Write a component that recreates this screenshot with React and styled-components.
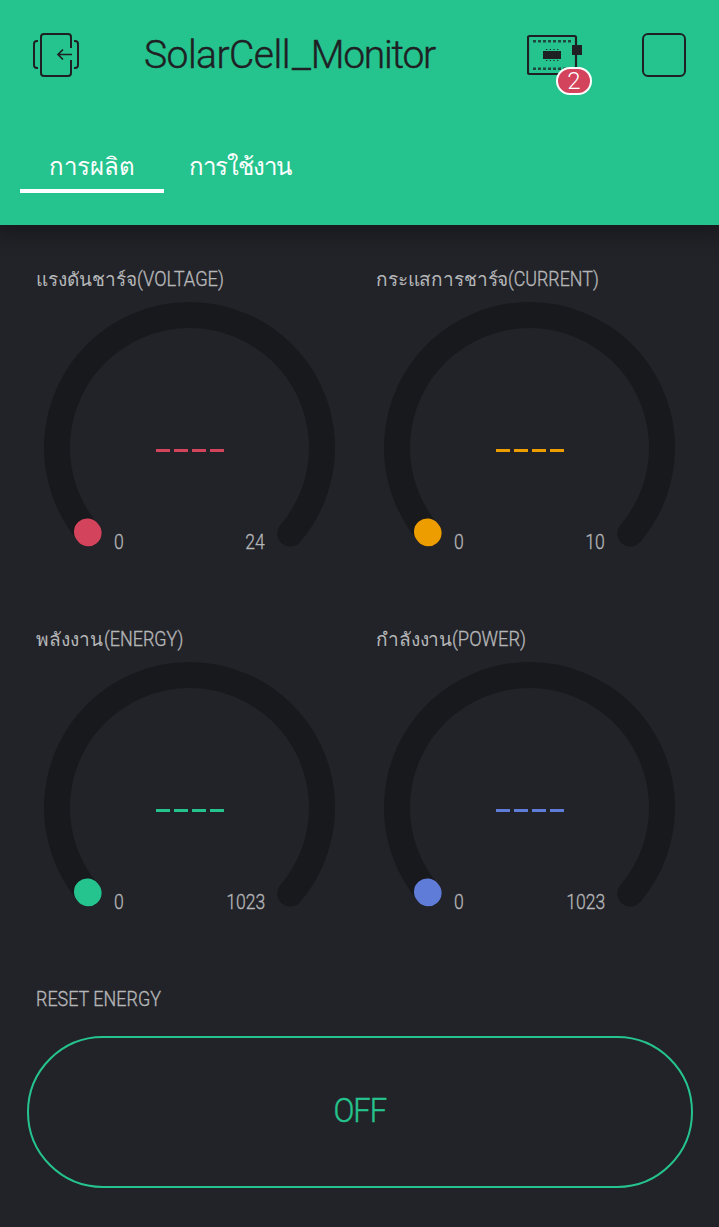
import React from "react";
import styled, { createGlobalStyle } from "styled-components";

const GlobalStyle = createGlobalStyle`
  * { box-sizing: border-box; }
  body { margin: 0; background: #222328; }
`;

const INK = "#1e2023";
const GREEN = "#25c48e";

const Screen = styled.div`
  width: 719px;
  height: 1227px;
  display: flex;
  flex-direction: column;
  overflow: hidden;
  background: #222328;
  font-family: Roboto, "Noto Sans", "Liberation Sans", sans-serif;
  font-weight: 300;
`;

const Header = styled.header`
  height: 225px;
  flex: none;
  background: ${GREEN};
  box-shadow: 0 4px 18px 6px rgba(12, 13, 16, 0.42);
`;

const TopBar = styled.div`
  height: 110px;
  display: flex;
  align-items: center;
  padding: 0 33px 0 32px;
`;

const Title = styled.h1`
  flex: 1;
  margin: 0 0 0 64px;
  color: ${INK};
  font-size: 39px;
  font-weight: 300;
  line-height: 46px;
  white-space: nowrap;
  letter-spacing: -0.55px;
  -webkit-text-stroke: 0.4px ${INK};
`;

const Underscore = styled.span`
  display: inline-block;
  margin: 0 1.5px 0 3px;
  transform: scaleX(1.12);
`;

const TitleEnd = styled.span`
  letter-spacing: -1.25px;
`;

const DeviceButton = styled.div`
  position: relative;
  width: 56px;
  height: 44px;
  margin-right: 59px;
  svg { display: block; }
`;

const Badge = styled.span`
  position: absolute;
  left: 29px;
  top: 34px;
  width: 36px;
  height: 28px;
  border: 2px solid #fff;
  border-radius: 14px;
  background: #d3435c;
  color: #fff;
  font-size: 24px;
  line-height: 25px;
  text-align: center;
`;

const StopButton = styled.div`
  width: 44px;
  height: 44px;
  border: 2px solid ${INK};
  border-radius: 6px;
`;

const Tabs = styled.nav`
  display: flex;
  padding: 33px 20px 0;
`;

const Tab = styled.div`
  width: ${(p) => p.$width}px;
  height: 50px;
  border-bottom: 4px solid ${(p) => (p.$active ? "#fff" : "transparent")};
  color: #fff;
  font-size: 24px;
  font-weight: 400;
  line-height: 48px;
  text-align: center;
  white-space: nowrap;
  letter-spacing: ${(p) => p.$spacing || 0}px;
`;

const Gauges = styled.main`
  display: grid;
  grid-template-columns: 340px 340px;
  grid-auto-rows: 360px;
  padding: 40px 0 0 20px;
`;

const GaugeCard = styled.section`
  display: flex;
  flex-direction: column;
`;

const Label = styled.div`
  display: flex;
  height: 28px;
  padding-left: 16px;
  color: #b5b6b8;
  line-height: 28px;
  white-space: nowrap;
`;

const ThaiText = styled.span`
  font-size: 19px;
  line-height: 29px;
  letter-spacing: ${(p) => p.$spacing}px;
`;

const LatinText = styled.span`
  font-size: 19.5px;
  line-height: 30px;
  transform: scaleX(${(p) => p.$stretch || 0.92});
  transform-origin: left;
  -webkit-text-stroke: 0.35px #b5b6b8;
`;

const Dial = styled.div`
  display: grid;
  width: 340px;
  height: 270px;
  > * { grid-area: 1 / 1; }
`;

const Reading = styled.div`
  display: flex;
  justify-content: center;
  gap: 4px;
  padding-top: 156px;
`;

const Dash = styled.i`
  width: 14px;
  height: 3px;
  background: ${(p) => p.$color};
`;

const Range = styled.div`
  display: flex;
  justify-content: space-between;
  align-self: end;
  padding: 0 95px 8px 94px;
  color: #b5b6b8;
  font-size: 19.5px;
  line-height: 24px;
  -webkit-text-stroke: 0.3px #b5b6b8;
`;

const Bound = styled.span`
  transform: scaleX(0.9);
  transform-origin: ${(p) => p.$edge};
`;

const Footer = styled.section`
  padding: 0 26px 0 20px;
`;

const ResetButton = styled.div`
  height: 152px;
  margin: 23px 0 0 7px;
  padding-bottom: 2px;
  border: 2px solid ${GREEN};
  border-radius: 76px;
  display: flex;
  align-items: center;
  justify-content: center;
  color: ${GREEN};
  font-size: 32.5px;
  letter-spacing: -1px;
  -webkit-text-stroke: 0.4px ${GREEN};
`;

const ButtonText = styled.span`
  transform: scaleX(0.95);
`;

const LogoutIcon = () => (
  <svg width="48" height="44" viewBox="0 0 48 44" fill="none" stroke={INK} strokeWidth="2">
    <path d="M39 15V4q0-3-3-3H12q-3 0-3 3v36q0 3 3 3h24q3 0 3-3V27" />
    <path d="M6 8H5Q2 8 2 11v21q0 3 3 3h1M42 8h1q3 0 3 3v21q0 3-3 3h-1" />
    <path d="M40 21.500H26M31 16.500l-5 5 5 5" strokeWidth="1.700" />
  </svg>
);

const BoardIcon = () => (
  <svg width="56" height="44" viewBox="0 0 56 44" fill="none">
    <rect x="1" y="3" width="48" height="38" rx="1.500" stroke={INK} strokeWidth="2.200" />
    <path d="M6 8.300h39M6 35.700h39" stroke={INK} strokeOpacity=".75" strokeWidth="2.600" strokeDasharray="3 2" />
    <rect x="16" y="18" width="18" height="8" fill={INK} />
    <path d="M19 16.500h13M19 27.500h13" stroke={INK} strokeWidth="1.200" strokeDasharray="1.200 2.500" />
    <rect x="45" y="12" width="10" height="10" fill={INK} />
  </svg>
);

const GaugeArc = ({ color }) => (
  <svg width="340" height="270" viewBox="0 0 340 270">
    <path
      d="M68.700 240.500A132.500 132.500 0 1 1 270.300 240.500"
      fill="none"
      stroke="#18191c"
      strokeWidth="26"
      strokeLinecap="round"
    />
    <path d="M67.300 238.800L68.300 240" stroke={color} strokeWidth="26.600" strokeLinecap="round" />
  </svg>
);

const gauges = [
  { thai: "แรงดันชาร์จ", latin: "(VOLTAGE)", spacing: -0.05, stretch: 0.935, max: "24", color: "#d3435c" },
  { thai: "กระแสการชาร์จ", latin: "(CURRENT)", spacing: -0.15, stretch: 0.915, max: "10", color: "#ed9d00" },
  { thai: "พลังงาน", latin: "(ENERGY)", spacing: 0.1, stretch: 0.92, max: "1023", color: "#25c48e" },
  { thai: "กำลังงาน", latin: "(POWER)", spacing: -0.15, stretch: 0.94, max: "1023", color: "#5f7cd8" },
];

const Gauge = ({ thai, latin, max, color, spacing, stretch }) => (
  <GaugeCard>
    <Label>
      <ThaiText $spacing={spacing}>{thai}</ThaiText>
      <LatinText $stretch={stretch}>{latin}</LatinText>
    </Label>
    <Dial>
      <GaugeArc color={color} />
      <Reading>
        {[0, 1, 2, 3].map((i) => <Dash key={i} $color={color} />)}
      </Reading>
      <Range>
        <Bound $edge="left">0</Bound>
        <Bound $edge="right">{max}</Bound>
      </Range>
    </Dial>
  </GaugeCard>
);

export default function App() {
  return (
    <Screen>
      <GlobalStyle />
      <Header>
        <TopBar>
          <LogoutIcon />
          <Title>SolarCell<Underscore>_</Underscore><TitleEnd>Monitor</TitleEnd></Title>
          <DeviceButton>
            <BoardIcon />
            <Badge>2</Badge>
          </DeviceButton>
          <StopButton />
        </TopBar>
        <Tabs>
          <Tab $width={144} $active>การผลิต</Tab>
          <Tab $width={152} $spacing={-0.9}>การใช้งาน</Tab>
        </Tabs>
      </Header>
      <Gauges>
        {gauges.map((g) => <Gauge key={g.thai} {...g} />)}
      </Gauges>
      <Footer>
        <Label><LatinText>RESET ENERGY</LatinText></Label>
        <ResetButton><ButtonText>OFF</ButtonText></ResetButton>
      </Footer>
    </Screen>
  );
}
